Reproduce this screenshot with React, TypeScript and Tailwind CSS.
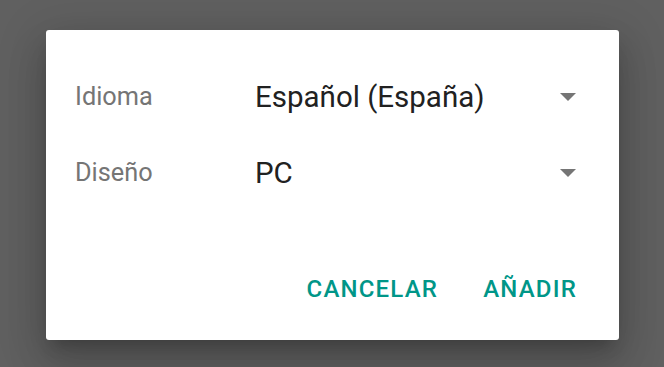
import React from "react";

function Arrow() {
  return (
    <svg width="16" height="8" viewBox="0 0 16 8" className="shrink-0">
      <polygon points="0,0 16,0 8,8" fill="#757575" />
    </svg>
  );
}

function Row({ label, value }: { label: string; value: string }) {
  return (
    <div className="flex h-[48px] items-center">
      <div className="w-[180px] shrink-0 text-[25.3px] leading-[32px] text-[#757575]">{label}</div>
      <div className="flex flex-1 items-center justify-between pr-[43px]">
        <span className="text-[29.5px] leading-[36px] text-[#212121]">{value}</span>
        <Arrow />
      </div>
    </div>
  );
}

export default function App() {
  return (
    <div className="h-[367px] w-[664px] overflow-hidden bg-[#606060] pt-[30px] pl-[46px] font-['Roboto',sans-serif]">
      <div className="flex h-[310px] w-[573px] flex-col rounded-[3px] bg-white shadow-[0_11px_15px_-7px_rgba(0,0,0,0.2),0_24px_38px_3px_rgba(0,0,0,0.14),0_9px_46px_8px_rgba(0,0,0,0.12)]">
        <div className="flex flex-col gap-[28px] pt-[43px] pl-[29px]">
          <Row label="Idioma" value="Español (España)" />
          <Row label="Diseño" value="PC" />
        </div>
        <div className="flex-1" />
        <div className="mb-[27px] flex h-[48px] items-center justify-end gap-[45px] pr-[43px]">
          <button className="text-[24px] font-medium leading-[32px] tracking-[1.2px] text-[#009688]">CANCELAR</button>
          <button className="mr-[-1px] text-[24px] font-medium leading-[32px] tracking-[1.2px] text-[#009688]">AÑADIR</button>
        </div>
      </div>
    </div>
  );
}
